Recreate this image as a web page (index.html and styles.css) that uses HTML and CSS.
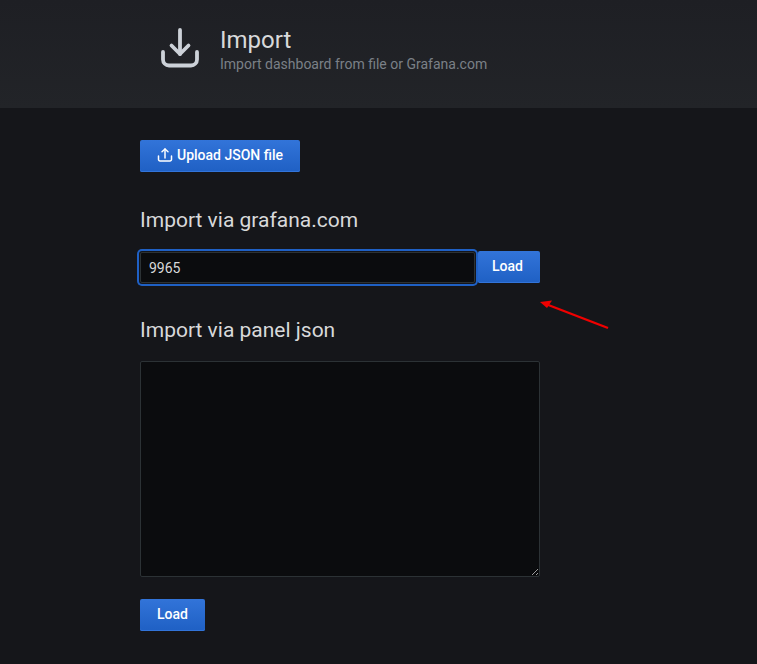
FILE: index.html
```html
<!DOCTYPE html>
<html lang="en">
<head>
    <meta charset="UTF-8">
    <meta name="viewport" content="width=device-width, initial-scale=1.0">
    <title>Import</title>
    <link rel="stylesheet" href="styles.css">
</head>
<body>
    <header class="page-header">
        <svg class="header-icon" width="40" height="40" viewBox="0 0 40 40" fill="none" stroke="#ccd1d8" stroke-width="3.8" stroke-linecap="round" stroke-linejoin="round">
            <path d="M20 2v24"/>
            <path d="M11.500 17.500l8.500 8.500 8.500-8.500"/>
            <path d="M3 24v7.500a6 6 0 0 0 6 6h22a6 6 0 0 0 6-6V24"/>
        </svg>
        <div>
            <h1 class="title">Import</h1>
            <div class="subtitle">Import dashboard from file or Grafana.com</div>
        </div>
    </header>

    <main class="content">
        <button type="button" class="btn btn-upload">
            <svg width="16" height="16" viewBox="0 0 16 16" fill="none" stroke="#fff" stroke-width="1.5" stroke-linecap="round" stroke-linejoin="round">
                <path d="M8 11V2"/>
                <path d="M5 4.800L8 2l3 2.800"/>
                <path d="M1.500 9v3.500a1.500 1.500 0 0 0 1.500 1.500h10a1.500 1.500 0 0 0 1.500-1.500V9"/>
            </svg>
            Upload JSON file
        </button>

        <h2 class="section-title first">Import via grafana.com</h2>
        <div class="load-row">
            <input type="text" class="id-input" value="9965">
            <button type="button" class="btn btn-load btn-row">Load</button>
        </div>

        <h2 class="section-title second">Import via panel json</h2>
        <textarea class="json-input"></textarea>

        <button type="button" class="btn btn-load btn-bottom">Load</button>
    </main>

    <!-- red arrow annotation on top of the page -->
    <svg class="arrow" width="757" height="664" viewBox="0 0 757 664">
        <path d="M608 328L547 304.500" stroke="#f00000" stroke-width="2.400" fill="none"/>
        <path d="M540 302L552 300.500L547 308Z" fill="#f00000"/>
    </svg>
</body>
</html>
```

FILE: styles.css
```css
* {
    box-sizing: border-box;
}

body {
    margin: 0;
    height: 664px;
    overflow: hidden;
    position: relative;
    background-color: #15161a;
    font-family: Roboto, "Liberation Sans", sans-serif;
    color: #d8d9da;
}

.page-header {
    display: flex;
    align-items: flex-start;
    gap: 20px;
    height: 108px;
    padding: 28px 0 0 160px;
    background: linear-gradient(to bottom, #1e1f24, #222428);
}

.title {
    margin: 0;
    font-size: 24px;
    font-weight: 400;
    line-height: 24px;
    color: #d8d9da;
}

.subtitle {
    margin-top: 4px;
    font-size: 14px;
    line-height: 17px;
    color: #7b8087;
}

.content {
    width: 400px;
    margin-left: 140px;
    padding-top: 32px;
}

.btn {
    display: inline-flex;
    align-items: center;
    justify-content: center;
    height: 32px;
    padding: 0 0 2px;
    border: none;
    border-radius: 2px;
    background: linear-gradient(to bottom, #3274d9, #1f60c4);
    box-shadow: inset 0 -1px 0 #3274d9;
    color: #fff;
    font-family: inherit;
    font-size: 14px;
    font-weight: 500;
    cursor: pointer;
}

.btn-upload {
    gap: 4px;
    width: 160px;
}

.section-title {
    margin: 0;
    font-size: 21px;
    font-weight: 400;
    line-height: 24px;
    color: #d8d9da;
}

.section-title.first {
    margin-top: 36px;
}

.section-title.second {
    margin-top: 35px;
}

.load-row {
    display: flex;
    align-items: flex-start;
    margin-top: 19px;
}

.id-input {
    width: 335px;
    height: 31px;
    margin: 1px 3px 0 0;
    padding: 0 8px;
    border: 1px solid #2c3235;
    border-radius: 2px;
    outline: none;
    box-shadow: 0 0 0 1px #15161a, 0 0 0 3px #1f60c4;
    background-color: #0b0c0e;
    color: #d8d9da;
    font-family: inherit;
    font-size: 14px;
}

.btn-load {
    width: 62px;
}

.btn-row {
    padding-right: 3px;
}

.json-input {
    display: block;
    width: 400px;
    height: 216px;
    margin-top: 19px;
    border: 1px solid #2c3235;
    border-radius: 2px;
    background-color: #0b0c0e;
    color: #d8d9da;
    color-scheme: dark;
}

.btn-bottom {
    width: 65px;
    margin-top: 22px;
}

.arrow {
    position: absolute;
    left: 0;
    top: 0;
    pointer-events: none;
}
```
